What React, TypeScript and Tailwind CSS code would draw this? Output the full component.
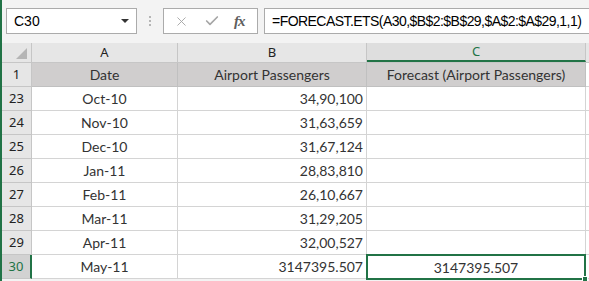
import { X, Check } from 'lucide-react';

const rows = [
  { n: 23, date: 'Oct-10', val: '34,90,100', fc: '' },
  { n: 24, date: 'Nov-10', val: '31,63,659', fc: '' },
  { n: 25, date: 'Dec-10', val: '31,67,124', fc: '' },
  { n: 26, date: 'Jan-11', val: '28,83,810', fc: '' },
  { n: 27, date: 'Feb-11', val: '26,10,667', fc: '' },
  { n: 28, date: 'Mar-11', val: '31,29,205', fc: '' },
  { n: 29, date: 'Apr-11', val: '32,00,527', fc: '' },
  { n: 30, date: 'May-11', val: '3147395.507', fc: '3147395.507' },
];

const cellFont = { fontFamily: 'Lato, "Noto Sans", sans-serif' };
const uiFont = { fontFamily: '"Noto Sans", "Open Sans", sans-serif' };
const barFont = { fontFamily: '"Liberation Sans", Arial, sans-serif' };

const App = () => {
  return (
    <div className="w-[589px] h-[281px] overflow-hidden bg-[#f3f3f3] border-l-2 border-[#217346]">
      {/* formula bar */}
      <div className="h-[43px] flex items-center pl-[4px] pb-[1px]">
        <div
          className="shrink-0 w-[131px] h-[26px] bg-white border border-[#ababab] flex items-center justify-between pl-[7px] pr-[7px] text-[14px] text-black"
          style={barFont}
        >
          <span>C30</span>
          <span className="w-0 h-0 border-l-[4px] border-r-[4px] border-t-[4px] border-l-transparent border-r-transparent border-t-[#333]" />
        </div>
        <div className="shrink-0 w-[26px] flex flex-col items-center gap-[2px]">
          <span className="w-[2px] h-[2px] bg-[#b5b5b5]" />
          <span className="w-[2px] h-[2px] bg-[#b5b5b5]" />
          <span className="w-[2px] h-[2px] bg-[#b5b5b5]" />
        </div>
        <div className="shrink-0 w-[95px] h-[26px] bg-white border border-[#ababab] flex items-center">
          <X className="ml-[10px] w-[15px] h-[15px] text-[#a6a6a6]" strokeWidth={1.5} />
          <Check className="ml-[15px] w-[16px] h-[16px] text-[#a6a6a6]" strokeWidth={2.5} />
          <span
            className="ml-[14px] text-[15px] italic font-bold text-[#5e5e5e] tracking-[-1px]"
            style={{ fontFamily: '"Liberation Serif", "Times New Roman", serif' }}
          >
            fx
          </span>
        </div>
        <div
          className="ml-[6px] flex-1 min-w-0 overflow-hidden h-[26px] bg-white border border-r-0 border-[#ababab] flex items-center pl-[7px] text-[14px] tracking-[-0.55px] text-black whitespace-nowrap"
          style={barFont}
        >
          =FORECAST.ETS(A30,$B$2:$B$29,$A$2:$A$29,1,1)
        </div>
      </div>

      {/* column headers */}
      <div className="flex h-[20px] bg-[#e6e6e6] border-b border-[#c6c6c6] text-[13px] text-[#222]" style={uiFont}>
        <div className="w-[30px] border-r border-[#c6c6c6] flex items-end justify-end pr-[4px] pb-[3px]">
          <span className="w-0 h-0 border-l-[11px] border-b-[11px] border-l-transparent border-b-[#b5b5b5]" />
        </div>
        <div className="w-[146px] border-r border-[#c6c6c6] flex items-center justify-center">A</div>
        <div className="w-[189px] border-r border-[#c6c6c6] flex items-center justify-center">B</div>
        <div className="w-[219px] bg-[#dedede] border-r border-[#c6c6c6] border-b-2 border-b-[#217346] flex items-center justify-center text-[#217346]">
          C
        </div>
        <div className="flex-1" />
      </div>

      {/* row 1 */}
      <div className="flex h-[24px] text-[14px] text-[#333]" style={cellFont}>
        <div className="w-[30px] bg-[#e6e6e6] border-r border-b border-[#c6c6c6] flex items-center justify-center text-[13px] text-[#222]" style={uiFont}>
          1
        </div>
        <div className="w-[146px] bg-[#d0cece] border-r border-b border-[#c0c0c0] flex items-center justify-center">Date</div>
        <div className="w-[189px] bg-[#d0cece] border-r border-b border-[#c0c0c0] flex items-center justify-center">Airport Passengers</div>
        <div className="w-[219px] bg-[#d0cece] border-r border-b border-[#c0c0c0] flex items-center justify-center">
          Forecast (Airport Passengers)
        </div>
        <div className="flex-1 bg-white border-b border-[#d4d4d4]" />
      </div>

      {rows.map((r) => {
        const sel = r.n === 30;
        return (
          <div key={r.n} className="flex h-[24px] text-[14px] text-[#333] bg-white" style={cellFont}>
            <div
              className={`w-[30px] border-b border-[#c6c6c6] flex items-center justify-center text-[13px] ${
                sel ? 'bg-[#d2d2d2] text-[#217346] border-r-2 border-r-[#217346]' : 'bg-[#e6e6e6] border-r text-[#222]'
              }`}
              style={uiFont}
            >
              {r.n}
            </div>
            <div className="w-[146px] border-r border-b border-[#d4d4d4] flex items-center justify-center">{r.date}</div>
            <div className="w-[189px] border-r border-b border-[#d4d4d4] flex items-center justify-end pr-[3px]">{r.val}</div>
            <div
              className={`flex items-center justify-center relative ${
                sel ? 'border-2 border-[#217346] -mt-[1px] h-[26px] -ml-[1px] w-[220px]' : 'w-[219px] border-r border-b border-[#d4d4d4]'
              }`}
            >
              {r.fc}
              {sel && <span className="absolute -right-[4px] -bottom-[4px] w-[6px] h-[6px] bg-[#217346] border border-white" />}
            </div>
            <div className="flex-1 border-b border-[#d4d4d4]" />
          </div>
        );
      })}
    </div>
  );
};

export default App;
